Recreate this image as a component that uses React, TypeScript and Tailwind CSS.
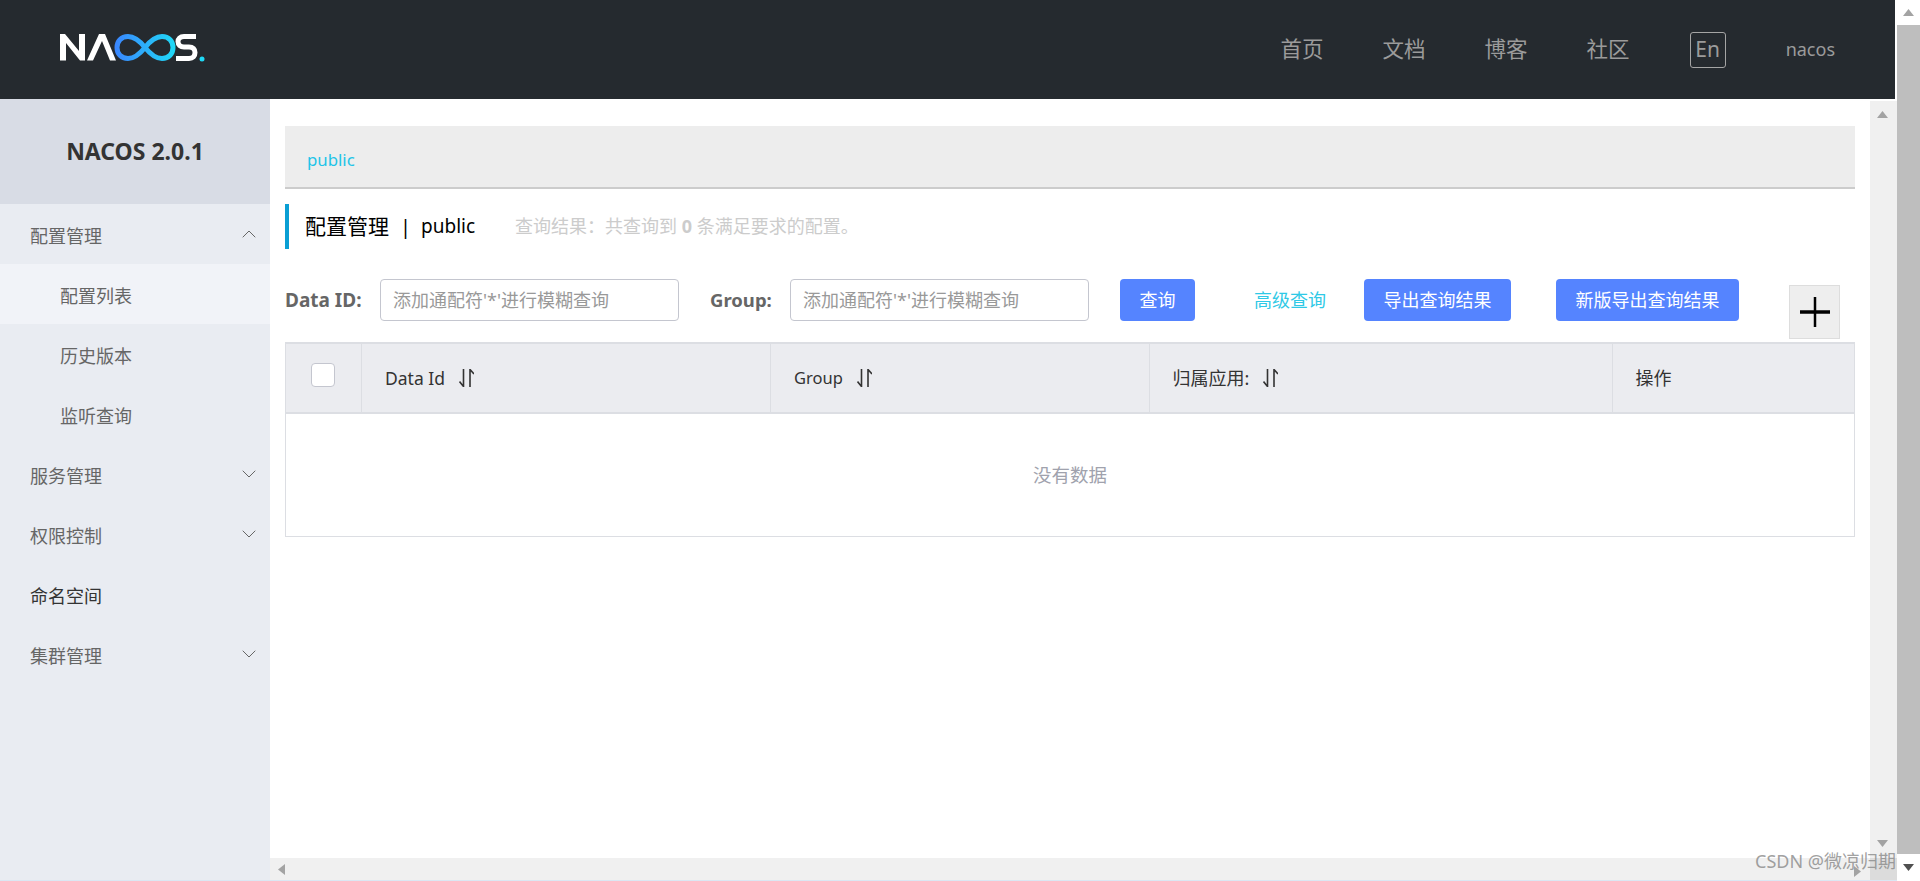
import { ChevronDown, ChevronUp } from 'lucide-react'

const navLinks = ['首页', '文档', '博客', '社区']

function Logo() {
  return (
    <svg width="146" height="29" viewBox="0 0 146 29" fill="none" className="mb-[4px] ml-[59px] shrink-0">
      <defs>
        <linearGradient id="inf" x1="56" y1="0" x2="116" y2="0" gradientUnits="userSpaceOnUse">
          <stop offset="0" stopColor="#3a86ff" />
          <stop offset="1" stopColor="#1fd9f6" />
        </linearGradient>
      </defs>
      <path d="M1 27.500V1H6L20 18V1H26V27.500H21L7 10V27.500Z" fill="#fff" />
      <path d="M28 27.500L40 1H46L57 27.500H51L43 8L34 27.500Z" fill="#fff" />
      <path
        d="M86 14.500C80 7 75 3.500 69 3.500C62 3.500 58 8.500 58 14.500C58 20.500 62 25.500 69 25.500C75 25.500 80 22 86 14.500C92 7 97 3.500 103 3.500C110 3.500 114 8.500 114 14.500C114 20.500 110 25.500 103 25.500C97 25.500 92 22 86 14.500Z"
        stroke="url(#inf)"
        strokeWidth="5"
      />
      <path
        d="M137 3.500H125C121 3.500 119 6 119 8.500C119 12 121.500 14 125 14H130C134 14 136 16.500 136 19.500C136 23 134 25.500 130 25.500H117"
        stroke="#fff"
        strokeWidth="5"
      />
      <circle cx="143" cy="26" r="2.500" fill="#1fd9f6" />
    </svg>
  )
}

function SortIcon() {
  return (
    <svg width="15" height="18" viewBox="0 0 15 18" fill="none" className="ml-[14px] shrink-0" stroke="#333" strokeWidth="1.600">
      <path d="M4.500 0V17.500L0.500 12.500" />
      <path d="M11 18V0.500L15 5" />
    </svg>
  )
}

function Triangle({ dir, color = '#a3a3a3' }: { dir: 'up' | 'down' | 'left' | 'right'; color?: string }) {
  const pts = {
    up: '0,7 11,7 5.500,0',
    down: '0,0 11,0 5.500,7',
    left: '7,0 7,11 0,5.500',
    right: '0,0 0,11 7,5.500',
  }[dir]
  const horizontal = dir === 'left' || dir === 'right'
  return (
    <svg width={horizontal ? 7 : 11} height={horizontal ? 11 : 7}>
      <polygon points={pts} fill={color} />
    </svg>
  )
}

function MenuItem({ label, sub, active, open, plain }: { label: string; sub?: boolean; active?: boolean; open?: boolean; plain?: boolean }) {
  return (
    <div
      className={`flex h-[60px] items-center justify-between pr-[9px] text-[18px] ${sub ? 'pl-[60px]' : 'pl-[30px]'} ${
        active ? 'bg-[#f1f3f8]' : ''
      } ${plain ? 'text-[#333]' : 'text-[#666]'}`}
    >
      <span className="pt-[5px]">{label}</span>
      {!sub && !plain && (open ? <ChevronUp size={24} strokeWidth={1} className="text-[#666]" /> : <ChevronDown size={24} strokeWidth={1} className="text-[#666]" />)}
    </div>
  )
}

function HeadCell({ label, width, sort, size = 'text-[18px]' }: { label: string; width: string; sort?: boolean; size?: string }) {
  return (
    <div className={`flex items-center border-r border-[#dcdee3] pl-[23px] text-[#333] last:border-r-0 ${width} ${size}`}>
      <span>{label}</span>
      {sort && <SortIcon />}
    </div>
  )
}

export default function App() {
  return (
    <div className="relative flex h-[881px] w-full overflow-hidden bg-white font-['Noto_Sans','Noto_Sans_CJK_SC',sans-serif]">
      <div className="flex w-[1897px] flex-col">
        <header className="flex h-[99px] w-[1895px] items-center bg-[#252a2f]">
          <Logo />
          <nav className="ml-auto flex items-center text-[21.500px] text-[#9b9b9b]">
            {navLinks.map((l) => (
              <span key={l} className="mr-[59px]">
                {l}
              </span>
            ))}
            <span className="ml-[1px] flex h-[36px] w-[36px] items-center justify-center rounded-[3px] border border-[#a5a5a5] text-[21px]">En</span>
            <span className="ml-[60px] mr-[60px] text-[18px]">nacos</span>
          </nav>
        </header>

        <div className="flex flex-1">
          <aside className="w-[270px] shrink-0 bg-[#e9ecf2]">
            <div className="flex h-[105px] items-center justify-center bg-[#d8dce5] text-[23px] font-bold text-[#333]">NACOS 2.0.1</div>
            <div className="bg-[#e9ecf2]">
              <MenuItem label="配置管理" open />
              <MenuItem label="配置列表" sub active />
              <MenuItem label="历史版本" sub />
              <MenuItem label="监听查询" sub />
              <MenuItem label="服务管理" />
              <MenuItem label="权限控制" />
              <MenuItem label="命名空间" plain />
              <MenuItem label="集群管理" />
            </div>
          </aside>

          <main className="flex min-w-0 flex-1 flex-col">
            <div className="flex flex-1">
              <div className="min-w-0 flex-1 px-[15px] pt-[27px]">
                <div className="flex h-[63px] items-center border-b-2 border-[#cccccc] bg-[#ededed] pl-[22px] text-[16.800px] text-[#1ec4e8]">
                  <span className="mt-[6px]">public</span>
                </div>

                <div className="mt-[15px] flex h-[45px] items-center border-l-4 border-[#0a9fd4] pl-[16px]">
                  <span className="text-[21px] text-black">配置管理</span>
                  <span className="ml-[11px] mr-[10px] text-[20px] text-black">|</span>
                  <span className="text-[19px] text-black">public</span>
                  <span className="ml-[40px] text-[18px] text-[#cccccc]">
                    查询结果：共查询到 <b>0</b> 条满足要求的配置。
                  </span>
                </div>

                <div className="mt-[30px] flex h-[63px] items-start">
                  <label className="flex h-[42px] w-[95px] shrink-0 items-center text-[19px] font-bold text-[#666]">Data ID:</label>
                  <div className="flex h-[42px] w-[299px] shrink-0 items-center rounded-[4px] border border-[#c4c6cf] pl-[12px] text-[18px] text-[#999]">添加通配符'*'进行模糊查询</div>
                  <label className="ml-[31px] flex h-[42px] w-[80px] shrink-0 items-center text-[18.500px] font-bold text-[#666]">Group:</label>
                  <div className="flex h-[42px] w-[299px] shrink-0 items-center rounded-[4px] border border-[#c4c6cf] pl-[12px] text-[18px] text-[#999]">添加通配符'*'进行模糊查询</div>
                  <button className="ml-[31px] h-[42px] w-[75px] shrink-0 rounded-[4px] bg-[#5584ff] text-[18px] text-white">查询</button>
                  <span className="ml-[59px] flex h-[42px] w-[73px] shrink-0 items-center text-[18px] text-[#2fc9e6]">高级查询</span>
                  <button className="ml-[37px] h-[42px] w-[147px] shrink-0 rounded-[4px] bg-[#5584ff] text-[18px] text-white">导出查询结果</button>
                  <button className="ml-[45px] h-[42px] w-[183px] shrink-0 rounded-[4px] bg-[#5584ff] text-[18px] text-white">新版导出查询结果</button>
                  <div className="ml-[50px] mt-[6px] flex h-[54px] w-[51px] shrink-0 items-center justify-center border border-[#dddddd] bg-[#eeeeee]">
                    <svg width="30" height="30" viewBox="0 0 30 30">
                      <path d="M0 15H30" stroke="#000" strokeWidth="3.500" />
                      <path d="M15 0V30" stroke="#000" strokeWidth="2.500" />
                    </svg>
                  </div>
                </div>

                <div className="border border-t-2 border-[#dcdee3]">
                  <div className="flex h-[70px] border-b-2 border-[#dcdee3] bg-[#ebecf0]">
                    <div className="flex w-[76px] shrink-0 justify-center border-r border-[#dcdee3] pr-[2px] pt-[19px]">
                      <span className="h-[24px] w-[24px] rounded-[4px] border border-[#c4c6cf] bg-white" />
                    </div>
                    <HeadCell label="Data Id" width="w-[409px] shrink-0" size="text-[17.500px]" sort />
                    <HeadCell label="Group" width="w-[378.500px] shrink-0" size="text-[16.500px]" sort />
                    <HeadCell label="归属应用:" width="w-[463px] shrink-0" sort />
                    <HeadCell label="操作" width="flex-1" />
                  </div>
                  <div className="flex h-[122px] items-center justify-center text-[18.500px] text-[#a0a2ad]">没有数据</div>
                </div>
              </div>

              <div className="mt-[2px] flex w-[27px] shrink-0 flex-col items-center justify-between bg-[#f0f0f0] pb-[11px] pr-[2px] pt-[10px]">
                <Triangle dir="up" />
                <Triangle dir="down" />
              </div>
            </div>

            <div className="flex h-[22px] items-center bg-[#f0f0f0]">
              <span className="ml-[8px] flex">
                <Triangle dir="left" />
              </span>
              <span className="ml-auto mr-[9px] mt-[4px] flex">
                <Triangle dir="right" />
              </span>
              <div className="h-full w-[27px] bg-[#dcdcdc]" />
            </div>
          </main>
        </div>
        <div className="h-px bg-[#dbe7f3]" />
      </div>

      <div className="flex w-[23px] shrink-0 flex-col items-center">
        <div className="flex h-[25px] items-center justify-center">
          <Triangle dir="up" />
        </div>
        <div className="w-full flex-1 bg-[#bebebe]" />
        <div className="flex h-[27px] items-center justify-center">
          <Triangle dir="down" color="#505050" />
        </div>
      </div>

      <div className="absolute left-[1755px] top-[848px] text-[18px] text-[#888]/80">CSDN @微凉归期</div>
    </div>
  )
}
